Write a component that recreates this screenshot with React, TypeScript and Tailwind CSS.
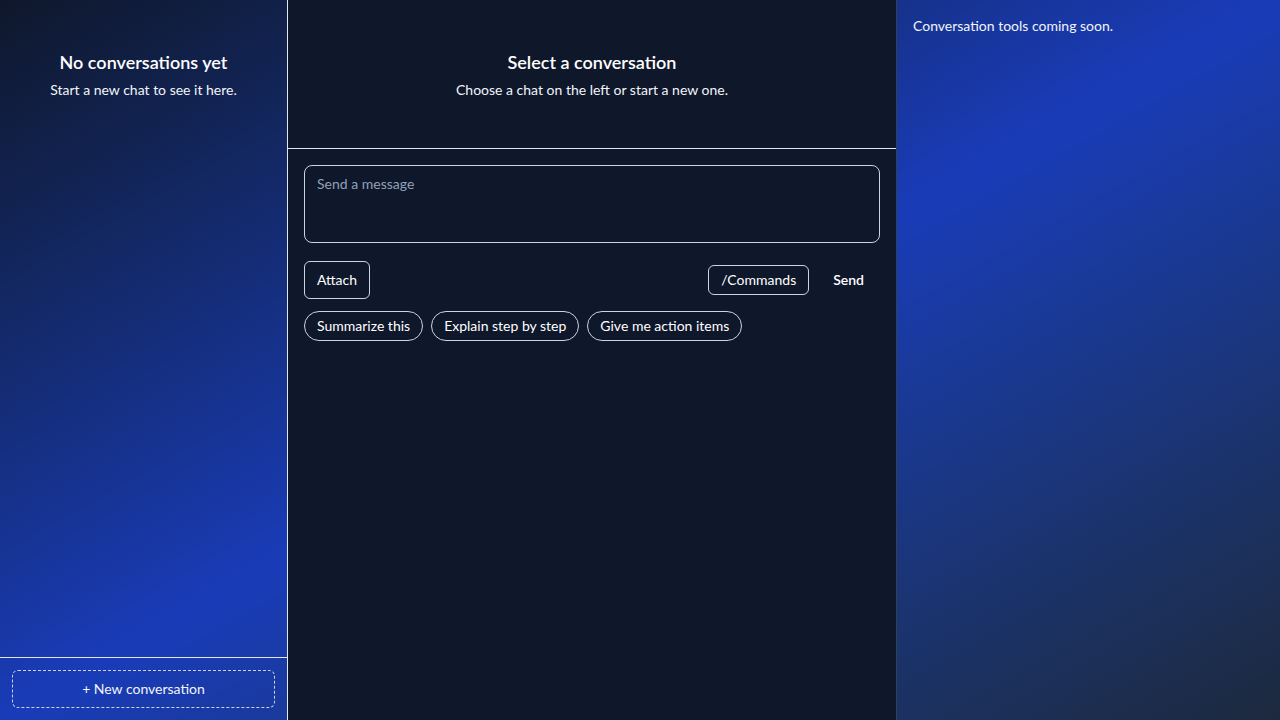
const quickPrompts = ['Summarize this', 'Explain step by step', 'Give me action items'];

export default function App() {
  return (
    <div
      className="flex h-screen w-full overflow-hidden bg-gradient-to-br from-slate-900 via-blue-800 to-slate-800 text-white"
      style={{ fontFamily: 'Lato, "Noto Sans", sans-serif' }}
    >
      {/* conversation list */}
      <aside className="flex w-[288px] shrink-0 flex-col border-r border-slate-200">
        <div className="flex-1 px-4 pt-12 text-center">
          <h2 className="text-lg font-semibold leading-7">No conversations yet</h2>
          <p className="mt-1 text-sm leading-5 text-slate-100">Start a new chat to see it here.</p>
        </div>
        <div className="border-t border-slate-200 p-3">
          <button
            type="button"
            className="w-full rounded-md border border-dashed border-slate-300 py-2 text-sm leading-5 text-slate-100"
          >
            + New conversation
          </button>
        </div>
      </aside>

      {/* chat area */}
      <main className="flex w-[608px] shrink-0 flex-col bg-slate-900">
        <header className="flex h-[149px] flex-col items-center justify-center border-b border-slate-200 text-center">
          <h1 className="text-lg font-semibold leading-7">Select a conversation</h1>
          <p className="mt-1 text-sm leading-5 text-slate-100">Choose a chat on the left or start a new one.</p>
        </header>

        <form className="p-4" onSubmit={e => e.preventDefault()}>
          <textarea
            rows={3}
            placeholder="Send a message"
            className="block w-full resize-none rounded-lg border border-slate-300 bg-transparent px-3 py-2 text-sm leading-5 text-white placeholder:text-slate-400 focus:outline-none"
          />
          <div className="mt-[18px] flex items-center">
            <button type="button" className="rounded-md border border-slate-300 px-3 py-2 text-sm leading-5">
              Attach
            </button>
            <div className="ml-auto flex items-center gap-2">
              <button type="button" className="rounded-md border border-slate-300 px-3 py-1 text-sm leading-5">
                /Commands
              </button>
              <button type="submit" className="px-4 py-2 text-sm font-semibold leading-5">
                Send
              </button>
            </div>
          </div>
          <div className="mt-3 flex gap-2">
            {quickPrompts.map(prompt => (
              <button
                key={prompt}
                type="button"
                className="rounded-full border border-slate-300 px-3 py-1 text-sm leading-5"
              >
                {prompt}
              </button>
            ))}
          </div>
        </form>
      </main>

      {/* tools panel */}
      <aside className="flex-1 border-l border-slate-700 p-4">
        <p className="text-sm leading-5 text-slate-100">Conversation tools coming soon.</p>
      </aside>
    </div>
  );
}
